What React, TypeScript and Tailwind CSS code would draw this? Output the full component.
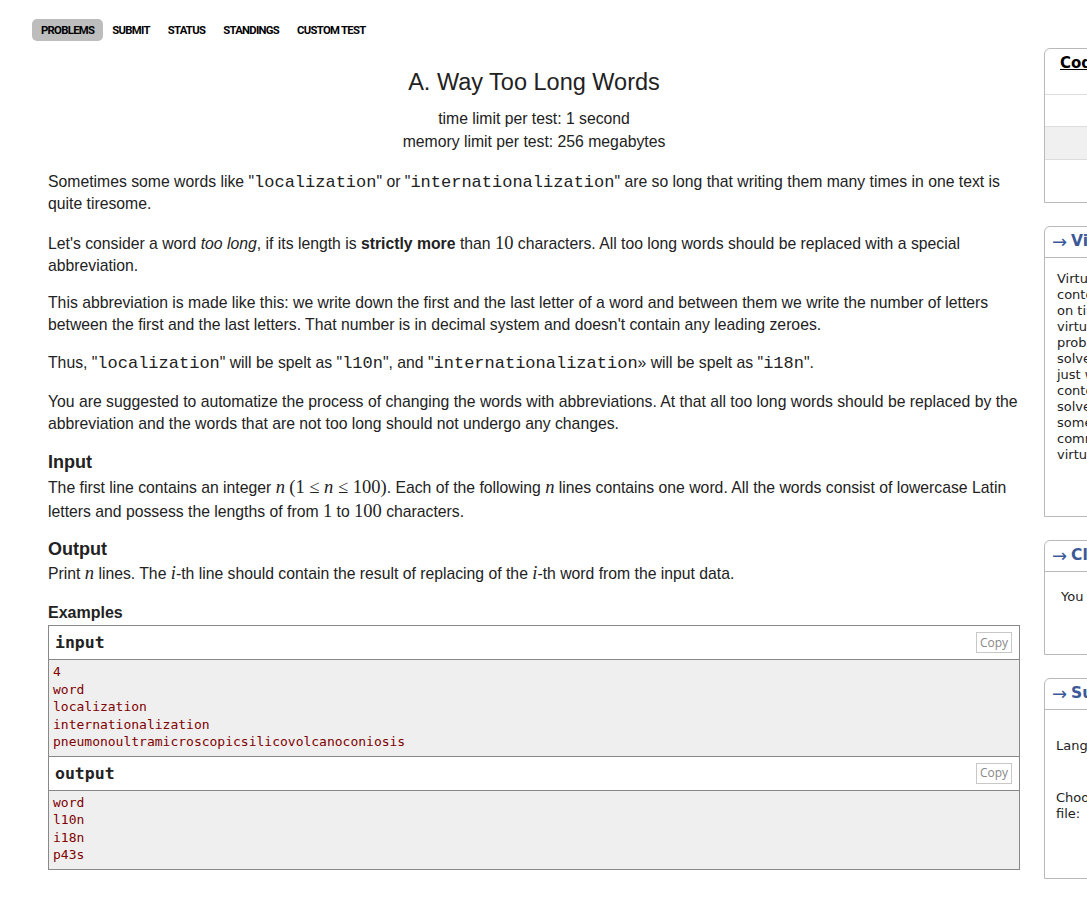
import React from "react";

const mono = "font-['Liberation_Mono',monospace] text-[17px] leading-none";
const serif = "font-['Liberation_Serif',serif] text-[18.5px] leading-none";

function M({ children }: { children: React.ReactNode }) {
  return <span className={mono}>{children}</span>;
}
function S({ children, i }: { children: React.ReactNode; i?: boolean }) {
  return <span className={serif + (i ? " italic" : "")}>{children}</span>;
}

function Sample({ label, lines }: { label: string; lines: string[] }) {
  return (
    <>
      <div className="flex items-start justify-between bg-white h-[33px] pl-[6px] pr-[7px]">
        <div className="font-['DejaVu_Sans_Mono',monospace] font-bold text-[16.5px] leading-[34px] text-[#222]">{label}</div>
        <div className="mt-[6px] h-[21px] w-[36px] border border-[#c8c8c8] flex items-center justify-center font-['Open_Sans',sans-serif] text-[12px] text-[#888]">
          Copy
        </div>
      </div>
      <div className="border-t border-[#888] bg-[#efefef] pl-[4px] pt-[3px] pb-[5px] font-['DejaVu_Sans_Mono',monospace] text-[13px] leading-[17.5px] text-[#800000]">
        {lines.map((l, k) => (
          <div key={k}>{l}</div>
        ))}
      </div>
    </>
  );
}

function Box({ children, className = "" }: { children: React.ReactNode; className?: string }) {
  return (
    <div className={"border border-[#b9b9b9] rounded-tl-[6px] rounded-tr-[6px] bg-white " + className}>{children}</div>
  );
}

function Caption({ text }: { text: string }) {
  return (
    <div className="h-[31px] border-b border-[#b9b9b9] pl-[7px] flex items-center text-[#3b5998] whitespace-nowrap">
      <span className="font-['DejaVu_Sans',sans-serif] font-normal text-[18px] leading-none mr-[4px]">→</span>
      <span className="font-['DejaVu_Sans',sans-serif] font-bold text-[15.5px]">{text}</span>
    </div>
  );
}

export default function App() {
  const nav = ["PROBLEMS", "SUBMIT", "STATUS", "STANDINGS", "CUSTOM TEST"];
  return (
    <div className="w-full overflow-hidden bg-white">
      <div className="flex items-start w-[1400px]">
        {/* main column */}
        <div className="w-[988px] ml-[32px] shrink-0">
          <div className="flex mt-[19px] h-[22px]">
            {nav.map((n, k) => (
              <div
                key={n}
                className={
                  "px-[9px] h-[22px] flex items-center rounded-[5px] font-['Roboto',sans-serif] font-bold text-[11.3px] text-black tracking-[-0.7px] pt-[2px] " +
                  (k === 0 ? "bg-[#bdbdbd]" : "")
                }
              >
                {n}
              </div>
            ))}
          </div>

          <div className="pl-[16px] font-['Liberation_Sans',Arial,sans-serif] text-[#222]">
            <div className="text-center mt-[26px] text-[23.5px] leading-[30px]">A. Way Too Long Words</div>
            <div className="text-center mt-[10px] text-[15.75px] leading-[23px]">
              <div>time limit per test: 1 second</div>
              <div>memory limit per test: 256 megabytes</div>
            </div>

            <div className="text-[15.75px] leading-[22px]">
              <p className="mt-[18px]">
                Sometimes some words like "<M>localization</M>" or "<M>internationalization</M>" are so long that writing them many times in one text is quite tiresome.
              </p>
              <p className="mt-[18px]">
                Let's consider a word <i>too long</i>, if its length is <b>strictly more</b> than <S>10</S> characters. All too long words should be replaced with a special abbreviation.
              </p>
              <p className="mt-[15px]">
                This abbreviation is made like this: we write down the first and the last letter of a word and between them we write the number of letters between the first and the last letters. That number is in decimal system and doesn't contain any leading zeroes.
              </p>
              <p className="mt-[16px]">
                Thus, "<M>localization</M>" will be spelt as "<M>l10n</M>", and "<M>internationalization</M>» will be spelt as "<M>i18n</M>".
              </p>
              <p className="mt-[17px]">
                You are suggested to automatize the process of changing the words with abbreviations. At that all too long words should be replaced by the abbreviation and the words that are not too long should not undergo any changes.
              </p>
            </div>

            <div className="mt-[16px] text-[18px] leading-[22px] font-bold">Input</div>
            <p className="mt-[3px] text-[15.75px] leading-[24px]">
              The first line contains an integer <S i>n</S> <S>(1 ≤ </S><S i>n</S><S> ≤ 100)</S>. Each of the following <S i>n</S> lines contains one word. All the words consist of lowercase Latin letters and possess the lengths of from <S>1</S> to <S>100</S> characters.
            </p>

            <div className="mt-[14px] text-[18px] leading-[22px] font-bold">Output</div>
            <p className="mt-[2px] text-[15.75px] leading-[24px]">
              Print <S i>n</S> lines. The <S i>i</S>-th line should contain the result of replacing of the <S i>i</S>-th word from the input data.
            </p>

            <div className="mt-[17px] text-[16px] leading-[20px] font-bold">Examples</div>
            <div className="mt-[2px] border border-[#888]">
              <Sample
                label="input"
                lines={[
                  "4",
                  "word",
                  "localization",
                  "internationalization",
                  "pneumonoultramicroscopicsilicovolcanoconiosis",
                ]}
              />
              <div className="border-t border-[#888]">
                <Sample label="output" lines={["word", "l10n", "i18n", "p43s"]} />
              </div>
            </div>
          </div>
        </div>

        {/* sidebar */}
        <div className="w-[300px] ml-[24px] mt-[48px] shrink-0 font-['DejaVu_Sans',Verdana,sans-serif] text-[13px] text-[#222]">
          <Box className="h-[155px]">
            <div className="h-[46px] border-b border-[#ddd] pl-[15px] pt-[3px] whitespace-nowrap">
              <span className="font-bold underline text-black text-[15px]">Codeforces Beta Round 65 (Div. 2)</span>
            </div>
            <div className="h-[32px] border-b border-[#ddd]"></div>
            <div className="h-[33px] border-b border-[#ddd] bg-[#f0f0f0]"></div>
            <div className="h-[41px]"></div>
          </Box>

          <Box className="mt-[23px] h-[291px]">
            <Caption text="Virtual participation" />
            <div className="pl-[12px] pt-[13px] leading-[16px] whitespace-nowrap">
              Virtual contest is a way to take part in past<br />
              contest, as close as possible to participation<br />
              on time. It is supported only ICPC mode for<br />
              virtual contests. If you've seen these<br />
              problems, a virtual contest is not for you -<br />
              solve these problems in the archive. If you<br />
              just want to solve some problem from a<br />
              contest, a virtual contest is not for you -<br />
              solve this problem in the archive. Never use<br />
              someone else's code, read the tutorials or<br />
              communicate with other person during a<br />
              virtual contest.
            </div>
          </Box>

          <Box className="mt-[23px] h-[115px]">
            <Caption text="Clone Contest to Mashup" />
            <div className="pl-[16px] pt-[17px] leading-[16px] whitespace-nowrap">You can clone this contest to a mashup.</div>
          </Box>

          <Box className="mt-[23px] h-[201px]">
            <Caption text="Submit?" />
            <div className="pl-[11px] pt-[28px] leading-[16px] whitespace-nowrap">
              <div>Language:</div>
              <div className="mt-[36px]">
                Choose
                <br />
                file:
              </div>
            </div>
          </Box>
        </div>
      </div>
    </div>
  );
}
